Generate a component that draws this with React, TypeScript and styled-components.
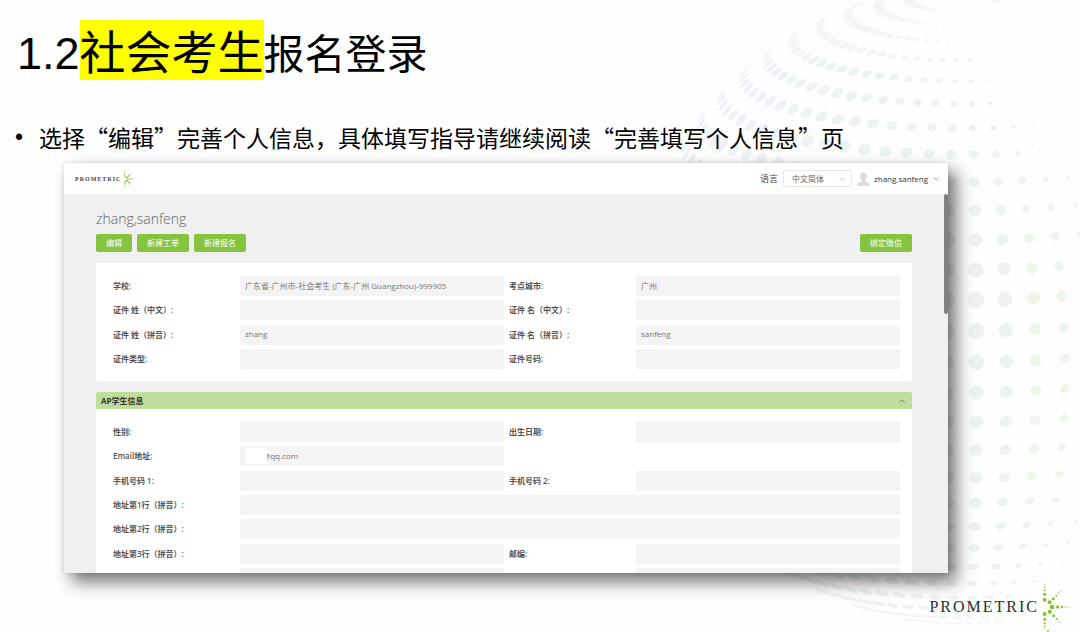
import React from "react";
import styled, { createGlobalStyle } from "styled-components";
import { ChevronDown, ChevronUp } from "lucide-react";

const GlobalStyle = createGlobalStyle`
  *, *::before, *::after { box-sizing: border-box; }
  body {
    margin: 0;
    background: #fefefe;
    color: #000;
    font-family: "Open Sans", "Noto Sans CJK SC", sans-serif;
  }
`;

const Slide = styled.main`
  position: relative;
  display: flex;
  flex-direction: column;
  height: 100vh;
  min-height: 560px;
  overflow: hidden;
`;

const GlobeArt = styled.svg`
  position: absolute;
  top: 0;
  right: 0;
  width: 460px;
  height: 632px;
`;

const SlideTitle = styled.h1`
  position: relative;
  display: flex;
  align-items: baseline;
  margin: 0;
  padding: 20px 17px 0;
  font-family: "Liberation Sans", "Noto Sans CJK SC", sans-serif;
  font-size: 41px;
  font-weight: 400;
  line-height: 54px;
  white-space: nowrap;
`;

const TitleNumber = styled.span`
  font-size: 45px;
`;

const TitleMark = styled.mark`
  padding-top: 6px;
  background: #ffff00;
  color: inherit;
  font-size: 46px;
`;

const Bullets = styled.ul`
  position: relative;
  margin: 0;
  padding: 38px 15px 0;
  list-style: none;
  font-family: "Noto Sans CJK SC", sans-serif;
  font-size: 23px;
  line-height: 34px;
`;

const Bullet = styled.li`
  display: flex;
  white-space: nowrap;

  &::before {
    content: "•";
    width: 24px;
    font-family: "Liberation Sans", sans-serif;
  }
`;

const AppWindow = styled.section`
  position: relative;
  display: flex;
  flex: 1;
  flex-direction: column;
  min-height: 0;
  margin: 9px 132px 0 64px;
  overflow: hidden;
  background: #f0f0f0;
  box-shadow: 8px 9px 16px rgba(0, 0, 0, 0.55), 0 0 4px rgba(0, 0, 0, 0.12);
`;

const TopBar = styled.header`
  display: flex;
  align-items: center;
  justify-content: space-between;
  height: 31px;
  flex: none;
  padding: 0 8px 0 11px;
  background: #fff;
`;

const Brand = styled.div<{ $large?: boolean }>`
  display: flex;
  align-items: center;
  gap: ${(p) => (p.$large ? 3 : 1)}px;
  color: ${(p) => (p.$large ? "#22332f" : "#444")};
  font-family: "Liberation Serif", serif;
  font-size: ${(p) => (p.$large ? 16 : 6)}px;
  font-weight: ${(p) => (p.$large ? 400 : 700)};
  letter-spacing: ${(p) => (p.$large ? 2 : 1)}px;

  svg {
    width: ${(p) => (p.$large ? 32 : 12)}px;
    height: ${(p) => (p.$large ? 54 : 20)}px;
  }
`;

const TopTools = styled.div`
  display: flex;
  align-items: center;
`;

const LanguageLabel = styled.label`
  margin-right: 5px;
  color: #444;
  font-size: 9px;
`;

const SelectBox = styled.div`
  display: grid;
  align-items: center;
  width: 69px;
  margin-right: 5px;

  & > * {
    grid-area: 1 / 1;
  }

  svg {
    justify-self: end;
    margin-right: 6px;
    color: #aaa;
    pointer-events: none;
  }
`;

const LanguageSelect = styled.select`
  width: 100%;
  height: 17px;
  padding: 0 8px;
  appearance: none;
  border: 1px solid #e8e8e8;
  border-radius: 2px;
  background: #fff;
  color: #666;
  font-family: inherit;
  font-size: 8px;
`;

const AccountButton = styled.button`
  display: flex;
  align-items: center;
  gap: 4px;
  padding: 0;
  border: 0;
  background: none;
  color: #333;
  font-family: inherit;
  font-size: 8px;
`;

const Page = styled.div`
  padding: 15px 36px 0 32px;
`;

const ScrollThumb = styled.div`
  position: absolute;
  top: 31px;
  right: 0;
  width: 4px;
  height: 120px;
  border-radius: 2px;
  background: #808080;
`;

const StudentName = styled.h2`
  margin: 0;
  color: #666;
  font-size: 14px;
  font-weight: 300;
  line-height: 20px;
`;

const Toolbar = styled.div`
  display: flex;
  gap: 5px;
  padding: 5px 0 11px;

  & > :last-child {
    margin-left: auto;
  }
`;

const ActionButton = styled.button`
  height: 18px;
  padding: 0 10px;
  border: 0;
  border-radius: 2px;
  background: #86c440;
  color: #fff;
  font-family: inherit;
  font-size: 8px;
  line-height: 18px;
`;

const Panel = styled.section`
  margin-bottom: 11px;
  border-radius: 2px;
  background: #fff;
`;

const PanelHead = styled.button`
  display: flex;
  align-items: center;
  justify-content: space-between;
  width: 100%;
  height: 17px;
  padding: 0 5px;
  border: 0;
  border-radius: 2px 2px 0 0;
  background: #bfdd9b;
  color: #333;
  font-family: inherit;
  font-size: 8px;
  font-weight: 700;
`;

const FieldGrid = styled.div<{ $rows: number }>`
  display: grid;
  grid-template-columns: 1fr 1fr;
  column-gap: 5px;
  align-content: space-between;
  min-height: ${(p) => (p.$rows > 4 ? 191 : 118)}px;
  padding: 13px 12px 12px 17px;
`;

const FieldRow = styled.div<{ $wide?: boolean }>`
  position: relative;
  display: flex;
  align-items: center;
  grid-column: ${(p) => (p.$wide ? "1 / -1" : "auto")};
`;

const FieldLabel = styled.label`
  flex: none;
  width: 127px;
  color: #555;
  font-size: 8px;
  font-weight: 600;
  line-height: 20px;
  white-space: nowrap;
`;

const FieldInput = styled.input<{ $masked?: boolean }>`
  flex: 1;
  min-width: 0;
  height: 20px;
  padding: 0 5px 2px ${(p) => (p.$masked ? 23 : 5)}px;
  border: 0;
  border-radius: 2px;
  background: #f4f4f4;
  color: #777;
  font-family: inherit;
  font-size: 8px;
`;

const Mask = styled.span`
  position: absolute;
  left: 132px;
  width: 22px;
  height: 16px;
  background: #fff;
`;

const Blank = styled.div``;

const Footer = styled.footer`
  position: relative;
  display: flex;
  align-items: center;
  justify-content: flex-end;
  height: 59px;
  flex: none;
  padding: 9px 6px 0;
`;

const RAD = Math.PI / 180;

/* Halftone globe: dots on a tilted sphere that shrink toward its right edge. */
function globeDots() {
  const cx = 965;
  const cy = 300;
  const tilt = 14 * RAD;
  const dots: { x: number; y: number; r: number; z: number; a: number; fill: string }[] = [];
  for (let row = -15; row <= 15; row++) {
    const front = row * 5.5;
    const lat = front * RAD + tilt;
    for (let col = -24; col <= 6; col++) {
      const lon = (2 + col * 5.27) * RAD;
      const px = Math.cos(lat) * Math.sin(lon);
      const py = Math.sin(lat) * Math.cos(tilt) - Math.cos(lat) * Math.cos(lon) * Math.sin(tilt);
      const z = Math.cos(lat) * Math.cos(lon) * Math.cos(tilt) + Math.sin(lat) * Math.sin(tilt);
      const r = Math.min(
        8.5 - 0.05 * Math.max(front, 0),
        8.3 - (col > 0 ? 0.9 : 0.4) * col - (front > 0 ? 0.13 * front : -0.05 * front)
      );
      if (z < 0.08 || r < 1) continue;
      const x = cx + 326 * px;
      const y = cy - (py > 0 ? 315 : 326) * py;
      const fill =
        y < 60 ? "#f4f5f6" : x > 1020 ? "#eef5eb" : x > 850 ? "#edf4f0" : x > 790 ? "#eef3f4" : "#eff1f8";
      dots.push({ x, y, r, z, a: Math.atan2(-py, px) / RAD, fill });
    }
  }
  return dots;
}

function Globe() {
  return (
    <GlobeArt viewBox="620 0 460 632" aria-hidden="true">
      {globeDots().map((d, i) => (
        <ellipse
          key={i}
          rx={d.r * d.z}
          ry={d.r}
          fill={d.fill}
          transform={`translate(${d.x.toFixed(1)} ${d.y.toFixed(1)}) rotate(${d.a.toFixed(1)})`}
        />
      ))}
    </GlobeArt>
  );
}

const burst: [number, number, number][] = [
  [8, 59, 6], [8, 43, 4.5], [8, 31, 3], [8, 22, 2.2], [8, 14, 1.6], [8, 6, 1.2],
  [8, 102, 6], [8, 118, 4.5], [8, 130, 3], [8, 139, 2.2], [8, 147, 1.6], [18, 153, 3],
  [23, 67, 6], [34, 56, 4.5], [43, 47, 3], [50, 40, 2.2], [56, 34, 1.6],
  [23, 95, 6], [35, 107, 4.5], [44, 117, 3], [51, 125, 2.2], [57, 131, 1.4],
  [30, 81, 7], [47, 81, 5], [60, 81, 3.4], [70, 81, 2.4], [79, 81, 1.6], [86, 81, 1.2],
];

function Burst() {
  return (
    <svg viewBox="0 0 96 162" fill="#84c22f" aria-hidden="true">
      {burst.map(([x, y, r]) => (
        <circle key={`${x}-${y}`} cx={x} cy={y} r={r} />
      ))}
    </svg>
  );
}

function SmallBurst() {
  return (
    <svg viewBox="0 0 12 20" fill="none" stroke="#9bce5c" strokeLinecap="round" aria-hidden="true">
      <path strokeWidth="1.2" d="M2.500 6.500 5 9M2.500 13.500 5 11M5.500 10H8M5 8.700 7.600 6M5 11.300 7.600 14" />
      <path strokeWidth="0.6" d="M2.500 6.500 3.200 1.500M2.500 13.500 3.200 18.500M8 10h3.500M7.600 6l1.800-1.800M7.600 14l1.800 1.800" />
    </svg>
  );
}

type FieldData = { id: string; label: string; value?: string; wide?: boolean; masked?: boolean; alone?: boolean };

const identity: FieldData[] = [
  { id: "school", label: "学校:", value: "广东省-广州市-社会考生 (广东-广州 Guangzhou)-999905" },
  { id: "city", label: "考点城市:", value: "广州" },
  { id: "last-cn", label: "证件 姓（中文）:" },
  { id: "first-cn", label: "证件 名（中文）:" },
  { id: "last-py", label: "证件 姓（拼音）:", value: "zhang" },
  { id: "first-py", label: "证件 名（拼音）:", value: "sanfeng" },
  { id: "id-type", label: "证件类型:" },
  { id: "id-no", label: "证件号码:" },
];

const student: FieldData[] = [
  { id: "gender", label: "性别:" },
  { id: "birth", label: "出生日期:" },
  { id: "email", label: "Email地址:", value: "@qq.com", masked: true, alone: true },
  { id: "phone1", label: "手机号码 1:" },
  { id: "phone2", label: "手机号码 2:" },
  { id: "addr1", label: "地址第1行（拼音）:", wide: true },
  { id: "addr2", label: "地址第2行（拼音）:", wide: true },
  { id: "addr3", label: "地址第3行（拼音）:" },
  { id: "zip", label: "邮编:" },
  { id: "province", label: "" },
  { id: "district", label: "" },
];

function Fields({ items, rows }: { items: FieldData[]; rows: number }) {
  return (
    <FieldGrid $rows={rows}>
      {items.map((f) => (
        <React.Fragment key={f.id}>
          <FieldRow $wide={f.wide}>
            <FieldLabel htmlFor={f.id}>{f.label}</FieldLabel>
            <FieldInput id={f.id} defaultValue={f.value} readOnly $masked={f.masked} />
            {f.masked && <Mask />}
          </FieldRow>
          {f.alone && <Blank />}
        </React.Fragment>
      ))}
    </FieldGrid>
  );
}

export default function App() {
  return (
    <Slide lang="zh-CN">
      <GlobalStyle />
      <Globe />
      <SlideTitle>
        <TitleNumber>1.2</TitleNumber>
        <TitleMark>社会考生</TitleMark>
        <span>报名登录</span>
      </SlideTitle>
      <Bullets>
        <Bullet>选择“编辑”完善个人信息，具体填写指导请继续阅读“完善填写个人信息”页</Bullet>
      </Bullets>
      <AppWindow>
        <TopBar>
          <Brand>
            PROMETRIC
            <SmallBurst />
          </Brand>
          <TopTools>
            <LanguageLabel htmlFor="language">语言</LanguageLabel>
            <SelectBox>
              <LanguageSelect id="language">
                <option>中文简体</option>
              </LanguageSelect>
              <ChevronDown size={8} />
            </SelectBox>
            <AccountButton>
              <svg width="13" height="14" viewBox="0 0 13 14" fill="#dcdcdc" aria-hidden="true">
                <ellipse cx="6.5" cy="4.5" rx="3.3" ry="4.2" />
                <path d="M5 7h3v2.600c2 .8 4.600 1.200 4.800 4.400H.2C.4 10.800 3 10.400 5 9.600z" />
              </svg>
              zhang,sanfeng
              <ChevronDown size={8} color="#777" />
            </AccountButton>
          </TopTools>
        </TopBar>
        <Page>
          <StudentName>zhang,sanfeng</StudentName>
          <Toolbar>
            <ActionButton>编辑</ActionButton>
            <ActionButton>新建工单</ActionButton>
            <ActionButton>新建报名</ActionButton>
            <ActionButton>绑定微信</ActionButton>
          </Toolbar>
          <Panel>
            <Fields items={identity} rows={4} />
          </Panel>
          <Panel>
            <PanelHead>
              AP学生信息
              <ChevronUp size={10} color="#55693f" />
            </PanelHead>
            <Fields items={student} rows={7} />
          </Panel>
        </Page>
        <ScrollThumb />
      </AppWindow>
      <Footer>
        <Brand $large>
          PROMETRIC
          <Burst />
        </Brand>
      </Footer>
    </Slide>
  );
}
